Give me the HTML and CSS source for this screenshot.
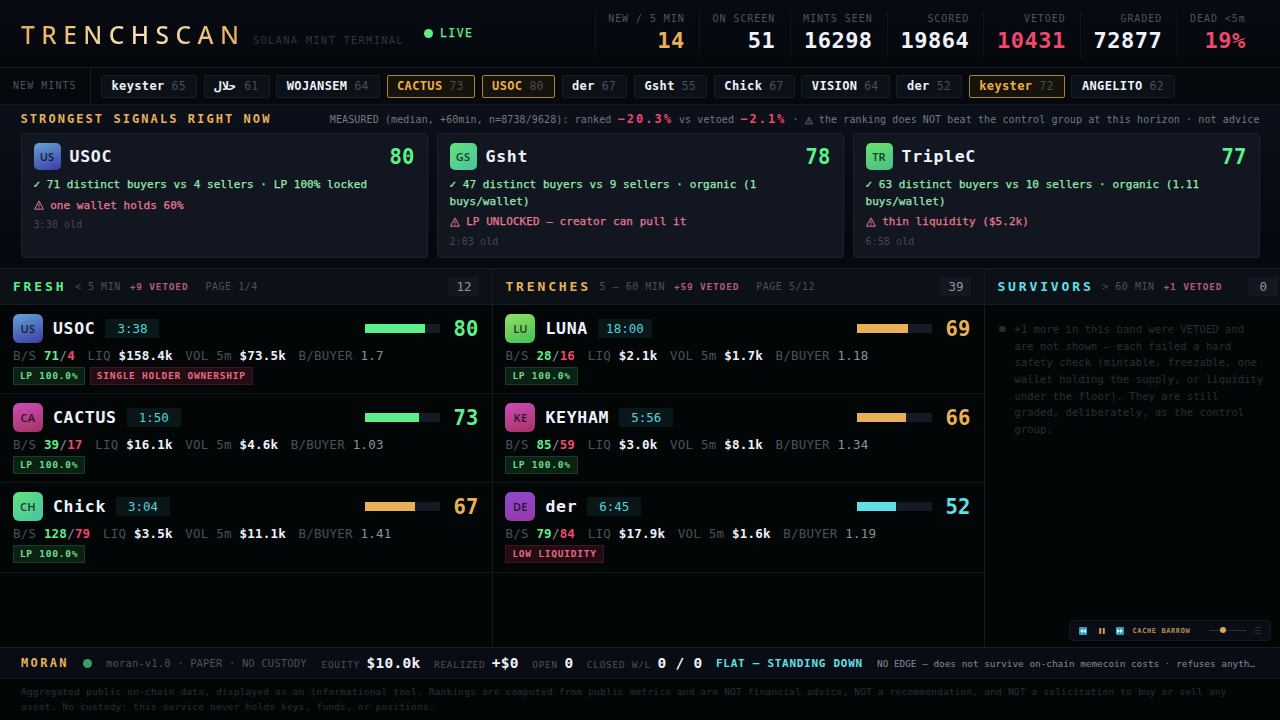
FILE: index.html
```html
<!DOCTYPE html>
<html lang="en">
<head>
<meta charset="UTF-8">
<title>TRENCHSCAN</title>
<link rel="stylesheet" href="styles.css">
</head>
<body>

<!-- top bar -->
<header class="top">
  <h1>TRENCHSCAN</h1>
  <span class="sub">SOLANA MINT TERMINAL</span>
  <span class="live"><i></i>LIVE</span>
  <div class="stats">
    <div><label>NEW / 5 MIN</label><b class="amber">14</b></div>
    <div><label>ON SCREEN</label><b>51</b></div>
    <div><label>MINTS SEEN</label><b>16298</b></div>
    <div><label>SCORED</label><b>19864</b></div>
    <div><label>VETOED</label><b class="red">10431</b></div>
    <div><label>GRADED</label><b>72877</b></div>
    <div><label>DEAD &lt;5m</label><b class="red">19%</b></div>
  </div>
</header>

<!-- ticker -->
<div class="ticker">
  <span class="tlabel">NEW MINTS</span>
  <div class="chips">
    <span class="chip"><b>keyster</b><i>65</i></span>
    <span class="chip"><b class="ar">حلال</b><i>61</i></span>
    <span class="chip"><b>WOJANSEM</b><i>64</i></span>
    <span class="chip hot"><b>CACTUS</b><i>73</i></span>
    <span class="chip hot"><b>USOC</b><i>80</i></span>
    <span class="chip"><b>der</b><i>67</i></span>
    <span class="chip"><b>Gsht</b><i>55</i></span>
    <span class="chip"><b>Chick</b><i>67</i></span>
    <span class="chip"><b>VISION</b><i>64</i></span>
    <span class="chip"><b>der</b><i>52</i></span>
    <span class="chip hot"><b>keyster</b><i>72</i></span>
    <span class="chip"><b>ANGELITO</b><i>62</i></span>
  </div>
</div>

<!-- strongest signals -->
<section class="signals">
  <div class="shead">
    <h2>STRONGEST SIGNALS RIGHT NOW</h2>
    <p>MEASURED (median, +60min, n=8738/9628): ranked <b>−20.3%</b> vs vetoed <b>−2.1%</b> · <svg class="tri" viewBox="0 0 10 10"><path d="M5 .9 9.4 9.2H.6Z M5 3.6V6.6 M5 7.3V8.3"/></svg> the ranking does NOT beat the control group at this horizon · not advice</p>
  </div>
  <div class="cards">
    <div class="card">
      <div class="chead"><span class="av blue">US</span><b>USOC</b><em class="green">80</em></div>
      <p class="good">✓ 71 distinct buyers vs 4 sellers · LP 100% locked</p>
      <p class="warn"><svg class="tri" viewBox="0 0 10 10"><path d="M5 .9 9.4 9.2H.6Z M5 3.6V6.6 M5 7.3V8.3"/></svg> one wallet holds 60%</p>
      <p class="old">3:30 old</p>
    </div>
    <div class="card">
      <div class="chead"><span class="av mint">GS</span><b>Gsht</b><em class="green">78</em></div>
      <p class="good">✓ 47 distinct buyers vs 9 sellers · organic (1<br>buys/wallet)</p>
      <p class="warn"><svg class="tri" viewBox="0 0 10 10"><path d="M5 .9 9.4 9.2H.6Z M5 3.6V6.6 M5 7.3V8.3"/></svg> LP UNLOCKED — creator can pull it</p>
      <p class="old">2:03 old</p>
    </div>
    <div class="card">
      <div class="chead"><span class="av leaf">TR</span><b>TripleC</b><em class="green">77</em></div>
      <p class="good">✓ 63 distinct buyers vs 10 sellers · organic (1.11<br>buys/wallet)</p>
      <p class="warn"><svg class="tri" viewBox="0 0 10 10"><path d="M5 .9 9.4 9.2H.6Z M5 3.6V6.6 M5 7.3V8.3"/></svg> thin liquidity ($5.2k)</p>
      <p class="old">6:58 old</p>
    </div>
  </div>
</section>

<!-- board -->
<main class="board">
  <section class="col">
    <div class="colhead"><h3 class="green">FRESH</h3><span>&lt; 5 MIN</span><b>+9 VETOED</b><span class="page">PAGE 1/4</span><em>12</em></div>
    <div class="row">
      <div class="r1"><span class="av blue">US</span><b>USOC</b><span class="age">3:38</span><span class="bar"><i class="bg-green" style="width:80%"></i></span><em class="green">80</em></div>
      <div class="r2"><span>B/S <b class="green">71</b><u>/</u><b class="red">4</b></span><span>LIQ <b>$158.4k</b></span><span>VOL 5m <b>$73.5k</b></span><span>B/BUYER <u>1.7</u></span></div>
      <div class="tags"><span class="ok">LP 100.0%</span><span class="bad">SINGLE HOLDER OWNERSHIP</span></div>
    </div>
    <div class="row">
      <div class="r1"><span class="av pink">CA</span><b>CACTUS</b><span class="age">1:50</span><span class="bar"><i class="bg-green" style="width:73%"></i></span><em class="green">73</em></div>
      <div class="r2"><span>B/S <b class="green">39</b><u>/</u><b class="red">17</b></span><span>LIQ <b>$16.1k</b></span><span>VOL 5m <b>$4.6k</b></span><span>B/BUYER <u>1.03</u></span></div>
      <div class="tags"><span class="ok">LP 100.0%</span></div>
    </div>
    <div class="row">
      <div class="r1"><span class="av mint">CH</span><b>Chick</b><span class="age">3:04</span><span class="bar"><i class="bg-amber" style="width:67%"></i></span><em class="amber">67</em></div>
      <div class="r2"><span>B/S <b class="green">128</b><u>/</u><b class="red">79</b></span><span>LIQ <b>$3.5k</b></span><span>VOL 5m <b>$11.1k</b></span><span>B/BUYER <u>1.41</u></span></div>
      <div class="tags"><span class="ok">LP 100.0%</span></div>
    </div>
  </section>

  <section class="col">
    <div class="colhead"><h3 class="amber">TRENCHES</h3><span>5 – 60 MIN</span><b>+59 VETOED</b><span class="page">PAGE 5/12</span><em>39</em></div>
    <div class="row">
      <div class="r1"><span class="av lime">LU</span><b>LUNA</b><span class="age">18:00</span><span class="bar"><i class="bg-amber" style="width:69%"></i></span><em class="amber">69</em></div>
      <div class="r2"><span>B/S <b class="green">28</b><u>/</u><b class="red">16</b></span><span>LIQ <b>$2.1k</b></span><span>VOL 5m <b>$1.7k</b></span><span>B/BUYER <u>1.18</u></span></div>
      <div class="tags"><span class="ok">LP 100.0%</span></div>
    </div>
    <div class="row">
      <div class="r1"><span class="av pink">KE</span><b>KEYHAM</b><span class="age">5:56</span><span class="bar"><i class="bg-amber" style="width:66%"></i></span><em class="amber">66</em></div>
      <div class="r2"><span>B/S <b class="green">85</b><u>/</u><b class="red">59</b></span><span>LIQ <b>$3.0k</b></span><span>VOL 5m <b>$8.1k</b></span><span>B/BUYER <u>1.34</u></span></div>
      <div class="tags"><span class="ok">LP 100.0%</span></div>
    </div>
    <div class="row">
      <div class="r1"><span class="av violet">DE</span><b>der</b><span class="age">6:45</span><span class="bar"><i class="bg-cyan" style="width:52%"></i></span><em class="cyan">52</em></div>
      <div class="r2"><span>B/S <b class="green">79</b><u>/</u><b class="red">84</b></span><span>LIQ <b>$17.9k</b></span><span>VOL 5m <b>$1.6k</b></span><span>B/BUYER <u>1.19</u></span></div>
      <div class="tags"><span class="bad">LOW LIQUIDITY</span></div>
    </div>
  </section>

  <section class="col last">
    <div class="colhead"><h3 class="cyan">SURVIVORS</h3><span>&gt; 60 MIN</span><b>+1 VETOED</b><em class="zero">0</em></div>
    <div class="empty"><i></i><p>+1 more in this band were VETOED and are not shown — each failed a hard safety check (mintable, freezable, one wallet holding the supply, or liquidity under the floor). They are still graded, deliberately, as the control group.</p></div>
  </section>
</main>

<!-- music player, floats over the board -->
<div class="player">
  <svg class="ic" viewBox="0 0 8 8"><rect width="8" height="8" rx="1" fill="#2a9cc8"/><path d="M4 1.8V6.2L1 4ZM7 1.8V6.2L4 4Z" fill="#dff"/></svg>
  <svg class="ic" viewBox="0 0 8 8"><path d="M1.2 1H3.2V7H1.2ZM4.8 1H6.8V7H4.8Z" fill="#cfa055"/></svg>
  <svg class="ic" viewBox="0 0 8 8"><rect width="8" height="8" rx="1" fill="#2a9cc8"/><path d="M1 1.8V6.2L4 4ZM4 1.8V6.2L7 4Z" fill="#dff"/></svg>
  <span>CACHE BARROW</span>
  <div class="vol"><i></i></div>
  <svg class="menu" viewBox="0 0 6 7"><path d="M0 .5H6M0 3.5H6M0 6.5H6" stroke="#2b2f3a"/></svg>
</div>

<!-- bot status -->
<div class="bot">
  <b class="bname">MORAN</b><i class="dot"></i>
  <span class="ver">moran-v1.0 · PAPER · NO CUSTODY</span>
  <span class="kv">EQUITY <b>$10.0k</b></span>
  <span class="kv">REALIZED <b>+$0</b></span>
  <span class="kv">OPEN <b>0</b></span>
  <span class="kv">CLOSED W/L <b>0 / 0</b></span>
  <b class="flat">FLAT — STANDING DOWN</b>
  <span class="edge">NO EDGE — does not survive on-chain memecoin costs · refuses anyth…</span>
</div>

<footer>Aggregated public on-chain data, displayed as an informational tool. Rankings are computed from public metrics and are NOT financial advice, NOT a recommendation, and NOT a solicitation to buy or sell any<br>asset. No custody: this service never holds keys, funds, or positions.</footer>

</body>
</html>
```
FILE: styles.css
```css
:root{
  --green:#5cf08a;--amber:#e9b155;--red:#f0476c;--cyan:#5fe0e6;
  --txt:#eef2fb;--mut:#8b909c;--dim:#50545f;--line:#161b22}
*{box-sizing:border-box;margin:0;padding:0}
body{
  width:1280px;height:720px;overflow:hidden;
  display:flex;flex-direction:column;
  font-family:'DejaVu Sans Mono','Liberation Mono',monospace;
  background:#030607;color:var(--txt);
  white-space:nowrap;position:relative}
i,em{font-style:normal}
u{text-decoration:none}
svg{display:block;flex:none}
.green{color:var(--green)}
.amber{color:var(--amber)}
.red{color:var(--red)}
.cyan{color:var(--cyan)}
.bg-green{background:var(--green)}
.bg-amber{background:var(--amber)}
.bg-cyan{background:var(--cyan)}

/* top bar */
.top{
  height:68px;flex:none;display:flex;
  padding:0 20px 0 21px;border-bottom:1px solid var(--line);
  background:linear-gradient(#080b14,#04070b)}
h1{
  font:500 24.5px/34px 'Noto Sans','Open Sans',sans-serif;
  letter-spacing:6.45px;margin-top:18px;width:232px;
  background:linear-gradient(90deg,#e6ac50,#f8e6bd 52%,#e6ac50 96%);
  -webkit-background-clip:text;background-clip:text;color:transparent}
.sub{font-size:10.5px;letter-spacing:1.22px;line-height:14px;color:#30343e;margin-top:33px;width:171px}
.live{
  display:flex;align-items:center;gap:7px;height:14px;margin-top:26px;
  font-size:11.5px;letter-spacing:1.45px;color:var(--green);
  -webkit-text-stroke:.25px}
.live i{width:9px;height:9px;border-radius:50%;background:var(--green)}
.stats{margin-left:auto;display:flex;height:46px;margin-top:11px}
.stats div{padding:0 14.3px 0 12.5px;border-left:1px solid #10141b;text-align:right}
.stats label{display:block;font-size:10px;line-height:12px;margin-top:2px;letter-spacing:.94px;color:var(--dim)}
.stats b{display:block;font-size:22px;line-height:28px;margin-top:2px;letter-spacing:.5px}

/* ticker */
.ticker{
  height:37px;flex:none;display:flex;align-items:center;
  border-bottom:1px solid var(--line);background:#05080d}
.tlabel{
  width:91px;height:36px;line-height:36px;padding-left:13px;
  font-size:10px;letter-spacing:1.05px;color:var(--dim);border-right:1px solid var(--line)}
.chips{display:flex;gap:6.7px;margin-left:10px}
.chip{
  display:flex;align-items:center;gap:7px;height:23px;padding:0 10.3px 0 9.5px;
  border:1px solid #181e27;border-radius:2px;background:#0c1118}
.chip b{font-size:12px;letter-spacing:.36px}
.chip i{font-size:11.5px;color:#484d58;letter-spacing:.12px}
.chip.hot{border-color:#a98338;background:#16130a}
.chip.hot b{color:#efad48}
.ar{width:23px;letter-spacing:0!important;font-family:'DejaVu Sans Mono','DejaVu Sans',sans-serif}

/* signals */
.signals{
  height:163px;flex:none;padding:0 20.5px;
  background:linear-gradient(#0b101a,#05080e)}
.shead{display:flex;justify-content:space-between;height:28px;line-height:28px}
h2{font-size:12px;font-weight:bold;letter-spacing:2.07px;color:var(--amber)}
.shead p{font-size:10px;letter-spacing:.1px;color:#747985}
.shead b{font-size:12px;letter-spacing:2px;color:var(--red)}
.tri{display:inline-block;width:10px;height:10px;vertical-align:-1.5px;fill:none;stroke:currentColor;stroke-width:1}
.shead .tri{width:8px;height:9px}
.cards{display:grid;grid-template-columns:repeat(3,1fr);gap:9px}
.card{
  height:125px;padding:9px 12px;border:1px solid #1c212c;
  border-radius:4px;background:#121620}
.chead{display:flex;align-items:center;height:27px}
.chead b,.r1 b{font-size:16.5px;letter-spacing:.7px}
.chead b{margin-left:9px}
.chead em{margin-left:auto;font-size:20.5px;font-weight:bold;letter-spacing:.2px}
.av{
  width:27px;height:27px;border-radius:5px;flex:none;
  display:flex;align-items:center;justify-content:center;
  font:600 11px 'Noto Sans','Open Sans',sans-serif;letter-spacing:.2px;color:rgba(0,0,0,.72)}
.blue{background:linear-gradient(160deg,#62a5d4,#3c3ba8)}
.mint{background:linear-gradient(140deg,#62e37d,#48c2a0)}
.leaf{background:linear-gradient(160deg,#6be26c,#46bf8a)}
.pink{background:linear-gradient(160deg,#cc4cbd,#a5335f)}
.lime{background:linear-gradient(160deg,#96e065,#42bf55)}
.violet{background:linear-gradient(160deg,#8b4dcc,#9a35a8)}
.card p{font-size:11px;line-height:16.7px;letter-spacing:.05px}
.card .good{color:#98e8ad;margin-top:7px;-webkit-text-stroke:.25px}
.card .warn{color:#ea7896;margin-top:4px;-webkit-text-stroke:.25px}
.card .old{font-size:10px;letter-spacing:.1px;color:#444955;margin-top:3px}

/* board */
.board{
  flex:1;display:grid;grid-template-columns:492.5px 492px 295.5px;
  border-top:1px solid #191e26;min-height:0}
.col{border-right:1px solid var(--line)}
.last{border:0}
.colhead{
  height:36px;display:flex;align-items:center;padding:0 13px 0 12.9px;
  background:#0c1017;border-bottom:1px solid var(--line);
  font-size:10px;letter-spacing:.53px;color:#4c505b}
h3{font-size:13px;letter-spacing:2.87px;margin-right:8.5px}
.colhead b{color:#b3597a;margin-left:9px;font-size:9.5px;letter-spacing:.8px}
.page{margin-left:17px}
.colhead em{
  margin-left:auto;padding:0 7px 0 8px;height:19px;line-height:19px;
  font-size:12.5px;letter-spacing:0;color:#9095a0;background:#121722}
.last .colhead{padding-right:2px}
.colhead .zero{padding:0 11px}
.row{height:89.2px;padding:9px 12.9px 0 12.9px;border-bottom:1px solid #10151a}
.r1{display:flex;align-items:center;height:29px}
.r1 .av{width:30px;height:29px;border-radius:6px}
.r1 b{margin-left:10px}
.age{
  width:54px;height:19px;line-height:19px;margin-left:10px;text-align:center;
  font-size:12.5px;color:#52d3dc;background:#0a1719}
.bar{width:75px;height:9px;margin-left:auto;background:#161a25}
.bar i{display:block;height:9px}
.r1 em{font-size:20.5px;font-weight:bold;letter-spacing:.2px;margin-left:14px}
.r2{display:flex;gap:12.6px;line-height:17px;margin-top:4px;font-size:12.5px;letter-spacing:.22px;color:#4c505b}
.r2 b{color:var(--txt)}
.r2 b.green{color:var(--green)}
.r2 b.red{color:var(--red)}
.r2 u{color:var(--mut)}
.tags{display:flex;gap:4.5px;margin-top:3px}
.tags span{
  height:18px;line-height:16px;padding:0 6px;border:1px solid;
  font-size:9.5px;font-weight:bold;letter-spacing:.76px}
.ok{color:#6fdc8e;background:#0b2114;border-color:#183d25!important}
.bad{color:#e56a80;background:#230c14;border-color:#3f1521!important}
.empty{display:flex;padding:16px 0 0 14.5px;color:#2a2e36;font-size:10.5px;line-height:16.65px;letter-spacing:.06px}
.empty i{width:7px;height:6px;border-radius:3px;background:#2a2d33;margin:5px 8.5px 0 0}
.empty p{width:252px;white-space:normal}

/* player */
.player{
  position:absolute;left:1069px;top:620px;width:202px;height:21px;
  display:flex;align-items:center;padding-left:9px;
  border:1px solid #141923;border-radius:5px;background:#0a0d15;
  font-size:7px;font-weight:bold;letter-spacing:.6px;color:#b98f4c}
.ic{width:8px;height:8px;margin-right:10.5px}
.player span{margin-left:-2px;width:76px}
.vol{width:37px;height:1px;background:#2e323c;position:relative}
.vol i{position:absolute;left:11px;top:-3px;width:6px;height:6px;border-radius:50%;background:#d9a85a}
.menu{width:6px;height:7px;margin-left:9px}

/* bot status */
.bot{
  height:32px;flex:none;display:flex;align-items:center;padding-left:21px;
  border-top:1px solid #191e26;border-bottom:1px solid var(--line);
  background:#090c14}
.bname{font-size:12px;letter-spacing:2.35px;color:var(--amber);width:62px}
.dot{width:9px;height:9px;border-radius:50%;background:#3a9f60;margin-right:14px}
.ver{font-size:10.5px;letter-spacing:.15px;color:#4c505b;width:215.5px}
.kv{font-size:9.5px;letter-spacing:.7px;color:#4c505b;margin-right:13.4px}
.kv b{font-size:14.5px;letter-spacing:.3px;color:var(--txt)}
.flat{font-size:11px;letter-spacing:.72px;color:var(--cyan);width:161px}
.edge{font-size:9.4px;letter-spacing:0;color:#858a96}
footer{
  height:41px;flex:none;padding:6px 21px 0;
  font-size:9.5px;line-height:14.6px;letter-spacing:.19px;color:#2a2f37}
```
